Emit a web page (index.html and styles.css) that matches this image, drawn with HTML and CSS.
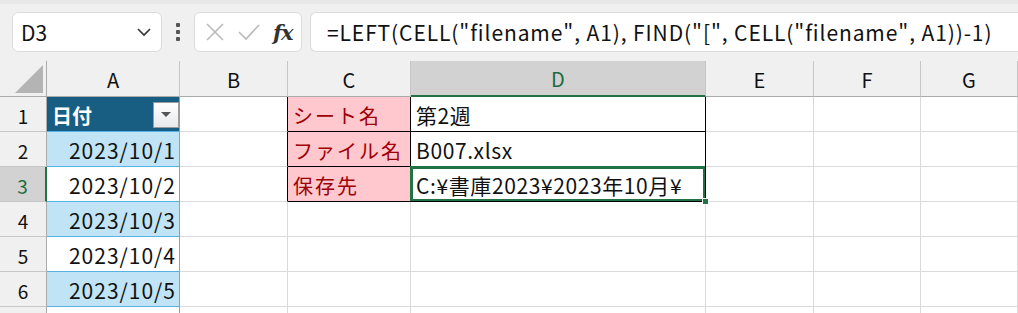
FILE: index.html
```html
<!DOCTYPE html>
<html lang="ja">
<head>
    <meta charset="UTF-8">
    <title>CELL関数 - ファイルの保存先</title>
    <link rel="stylesheet" href="styles.css">
</head>
<body>
    <div class="toolbar">
        <div class="name-box">
            <span>D3</span>
            <svg class="chevron" width="16" height="10" viewBox="0 0 16 10"><path d="M2 2 L8 8 L14 2" fill="none" stroke="#333" stroke-width="1.6"/></svg>
        </div>
        <div class="grip"><i></i><i></i><i></i></div>
        <div class="fx-box">
            <svg width="20" height="20" viewBox="0 0 20 20"><path d="M2 2 L18 18 M18 2 L2 18" stroke="#b9b9b9" stroke-width="1.6" fill="none"/></svg>
            <svg width="24" height="20" viewBox="0 0 24 20"><path d="M2 10 L9 17 L22 3" stroke="#b9b9b9" stroke-width="1.6" fill="none"/></svg>
            <span class="fx">fx</span>
        </div>
        <div class="formula">=LEFT(CELL("filename", A1), FIND("[", CELL("filename", A1))-1)</div>
    </div>

    <div class="sheet">
        <div class="corner"><span class="tri"></span></div>
        <div class="col-head">A</div>
        <div class="col-head">B</div>
        <div class="col-head">C</div>
        <div class="col-head active">D</div>
        <div class="col-head">E</div>
        <div class="col-head">F</div>
        <div class="col-head">G</div>

        <div class="row-head">1</div>
        <div class="cell tbl-head">日付<span class="filter"><span></span></span></div>
        <div class="cell box-left"></div>
        <div class="cell label">シート名</div>
        <div class="cell value">第2週</div>
        <div class="cell"></div>
        <div class="cell"></div>
        <div class="cell"></div>

        <div class="row-head">2</div>
        <div class="cell date band">2023/10/1</div>
        <div class="cell box-left"></div>
        <div class="cell label">ファイル名</div>
        <div class="cell value">B007.xlsx</div>
        <div class="cell"></div>
        <div class="cell"></div>
        <div class="cell"></div>

        <div class="row-head active">3</div>
        <div class="cell date">2023/10/2</div>
        <div class="cell box-left"></div>
        <div class="cell label">保存先</div>
        <div class="cell value selected">C:¥書庫2023¥2023年10月¥<span class="handle"></span></div>
        <div class="cell"></div>
        <div class="cell"></div>
        <div class="cell"></div>

        <div class="row-head">4</div>
        <div class="cell date band">2023/10/3</div>
        <div class="cell"></div>
        <div class="cell"></div>
        <div class="cell"></div>
        <div class="cell"></div>
        <div class="cell"></div>
        <div class="cell"></div>

        <div class="row-head">5</div>
        <div class="cell date">2023/10/4</div>
        <div class="cell"></div>
        <div class="cell"></div>
        <div class="cell"></div>
        <div class="cell"></div>
        <div class="cell"></div>
        <div class="cell"></div>

        <div class="row-head">6</div>
        <div class="cell date band">2023/10/5</div>
        <div class="cell"></div>
        <div class="cell"></div>
        <div class="cell"></div>
        <div class="cell"></div>
        <div class="cell"></div>
        <div class="cell"></div>

        <div class="row-head"></div>
        <div class="cell date"></div>
        <div class="cell"></div>
        <div class="cell"></div>
        <div class="cell"></div>
        <div class="cell"></div>
        <div class="cell"></div>
        <div class="cell"></div>
    </div>
</body>
</html>
```

FILE: styles.css
```css
* { margin: 0; padding: 0; box-sizing: border-box; }
body { width: 1018px; height: 313px; overflow: hidden; background: #fff; font-family: "Noto Sans CJK JP", "Noto Sans", sans-serif; color: #111; }

.toolbar { height: 61px; background: #f0f0f0; display: flex; align-items: center; padding: 0 0 1px 12px; border-top: 4px solid #e8e8e8; }
.name-box { width: 150px; height: 40px; background: #fff; border: 1px solid #dcdcdc; border-radius: 6px; display: flex; align-items: center; justify-content: space-between; padding: 0 9px 0 8px; font-size: 21px; }
.grip { width: 32px; display: flex; flex-direction: column; align-items: center; gap: 3px; }
.grip i { width: 4px; height: 4px; background: #555; border-radius: 1px; }
.fx-box { width: 108px; height: 40px; background: #fff; border: 1px solid #dcdcdc; border-radius: 6px; display: flex; align-items: center; gap: 12px; padding-left: 10px; }
.fx { font-family: "DejaVu Serif", "Liberation Serif", serif; font-style: italic; font-weight: bold; font-size: 21px; color: #333; letter-spacing: -1px; }
.formula { flex: 1; height: 40px; margin-left: 8px; background: #fff; border: 1px solid #dcdcdc; border-right: none; border-radius: 6px 0 0 6px; display: flex; align-items: center; padding-left: 16px; font-size: 21px; letter-spacing: 0.9px; white-space: nowrap; }

.sheet { display: grid; grid-template-columns: 47px 133px 108px 123px 295px 108px 107px 1fr; grid-template-rows: 36px repeat(7, 35px); }
.corner { background: #f0f0f0; border-right: 1px solid #ababab; border-bottom: 1px solid #ababab; position: relative; }
.tri { position: absolute; right: 3px; bottom: 3px; width: 0; height: 0; border-left: 28px solid transparent; border-bottom: 28px solid #b4b4b4; }
.col-head { background: #f0f0f0; border-right: 1px solid #c6c6c6; border-bottom: 1px solid #ababab; display: flex; align-items: center; justify-content: center; font-size: 20px; padding-top: 1px; }
.col-head.active { background: #d2d2d2; color: #1e6c41; border-bottom: 2px solid #217346; }
.row-head { background: #f0f0f0; border-right: 1px solid #ababab; border-bottom: 1px solid #c6c6c6; display: flex; align-items: center; justify-content: center; font-size: 19px; padding-top: 2px; }
.row-head.active { background: #d2d2d2; color: #1e6c41; border-right: 2px solid #217346; }

.cell { border-right: 1px solid #dadada; border-bottom: 1px solid #dadada; display: flex; align-items: center; padding: 2px 5px 0; font-size: 20px; white-space: nowrap; position: relative; }
.tbl-head { background: #175e82; color: #fff; font-weight: bold; border-right: 1px solid #59b0e3; border-bottom: 1px solid #59b0e3; justify-content: space-between; padding-right: 0; }
.filter { width: 26px; height: 26px; margin-top: -1px; background: linear-gradient(#ffffff, #e8e9ec); border: 1px solid #9a9a9a; display: flex; align-items: center; justify-content: center; }
.filter span { width: 0; height: 0; border-left: 5px solid transparent; border-right: 5px solid transparent; border-top: 5px solid #555; }
.date { justify-content: flex-end; padding-right: 3px; font-size: 21px; letter-spacing: 1px; border-right: 1px solid #59b0e3; border-bottom: 1px solid #59b0e3; }
.band { background: #c0e4f5; }
.box-left { border-right: 1px solid #000; }
.label { background: #ffc7ce; color: #9c0006; border-right: 1px solid #000; border-bottom: 1px solid #000; letter-spacing: 2px; }
.value { border-right: 1px solid #000; border-bottom: 1px solid #000; font-size: 21px; letter-spacing: 0.6px; }
.selected { box-shadow: 0 0 0 2px #217346 inset, -1px -1px 0 0 #217346; }
.handle { position: absolute; right: -4px; bottom: -4px; width: 7px; height: 7px; background: #217346; border: 1px solid #fff; z-index: 2; }
```
